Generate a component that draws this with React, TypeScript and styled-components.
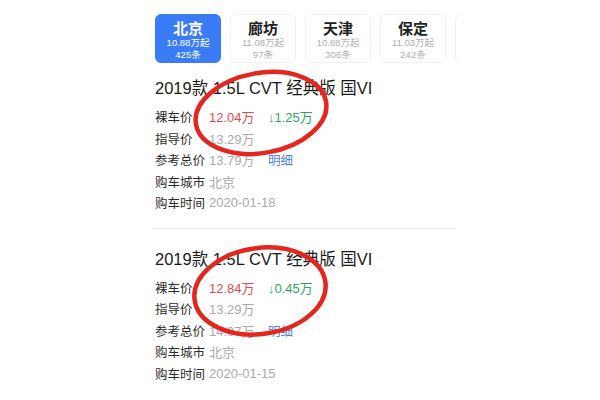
import React from "react";
import styled, { createGlobalStyle } from "styled-components";

const GlobalStyle = createGlobalStyle`
  html, body {
    margin: 0;
    padding: 0;
    background: #ffffff;
  }
  body {
    font-family: "Liberation Sans", "Noto Sans CJK SC", sans-serif;
  }
`;

const Page = styled.div`
  position: relative;
  width: 600px;
  height: 400px;
  overflow: hidden;
  display: flex;
  justify-content: center;
`;

const Phone = styled.div`
  width: 320px;
  flex: none;
  box-sizing: border-box;
  padding: 14px 0 0 15px;
  overflow: hidden;
`;

const TabRow = styled.div`
  display: flex;
  gap: 9px;
  overflow: hidden;
`;

const Tab = styled.div<{ $active?: boolean }>`
  flex: none;
  width: 66px;
  height: 49px;
  box-sizing: border-box;
  border-radius: 6px;
  padding-top: 4px;
  text-align: center;
  background: ${(p) => (p.$active ? "#3a7cf6" : "#ffffff")};
  border: 1px solid ${(p) => (p.$active ? "#3a7cf6" : "#f1f1f1")};
  color: ${(p) => (p.$active ? "#ffffff" : "#222222")};
`;

const TabCity = styled.div`
  font-family: "Noto Sans CJK SC", sans-serif;
  font-size: 15px;
  font-weight: 700;
  line-height: 18px;
`;

const TabSub = styled.div<{ $active?: boolean }>`
  font-size: 9.5px;
  line-height: 12px;
  white-space: nowrap;
  color: ${(p) => (p.$active ? "#ffffff" : "#b0b0b0")};
`;

const Card = styled.div`
  padding-top: 14px;
`;

const Title = styled.div`
  font-size: 16.5px;
  line-height: 22px;
  color: #1a1a1a;
  margin-bottom: 7px;
  white-space: nowrap;
`;

const Row = styled.div`
  display: flex;
  align-items: center;
  height: 21.5px;
`;

const Label = styled.div`
  width: 54px;
  flex: none;
  font-family: "Noto Sans CJK SC", sans-serif;
  font-size: 12.5px;
  color: #2b2b2b;
`;

const Value = styled.div<{ $tone?: "red" | "gray" }>`
  width: 59px;
  flex: none;
  font-size: 13px;
  white-space: nowrap;
  color: ${(p) => (p.$tone === "red" ? "#de4b50" : "#a9a9a9")};
`;

const Drop = styled.div`
  font-size: 13px;
  color: #2fa463;
  white-space: nowrap;
`;

const Link = styled.div`
  font-family: "Noto Sans CJK SC", sans-serif;
  font-size: 12.5px;
  color: #4f7fd8;
`;

const Divider = styled.div`
  height: 1px;
  background: #f0f0f0;
  margin: 14px 5px 5px -3px;
`;

const Marks = styled.svg`
  position: absolute;
  left: 0;
  top: 0;
  pointer-events: none;
`;

interface CityTab {
  city: string;
  price: string;
  count: string;
}

interface Purchase {
  bare: string;
  drop: string;
  guide: string;
  total: string;
  city: string;
  date: string;
}

const tabs: CityTab[] = [
  { city: "北京", price: "10.88万起", count: "425条" },
  { city: "廊坊", price: "11.08万起", count: "97条" },
  { city: "天津", price: "10.88万起", count: "306条" },
  { city: "保定", price: "11.03万起", count: "242条" },
];

const purchases: Purchase[] = [
  { bare: "12.04万", drop: "↓1.25万", guide: "13.29万", total: "13.79万", city: "北京", date: "2020-01-18" },
  { bare: "12.84万", drop: "↓0.45万", guide: "13.29万", total: "14.07万", city: "北京", date: "2020-01-15" },
];

const PurchaseCard = ({ item }: { item: Purchase }) => (
  <Card>
    <Title>2019款 1.5L CVT 经典版 国VI</Title>
    <Row>
      <Label>裸车价</Label>
      <Value $tone="red">{item.bare}</Value>
      <Drop>{item.drop}</Drop>
    </Row>
    <Row>
      <Label>指导价</Label>
      <Value>{item.guide}</Value>
    </Row>
    <Row>
      <Label>参考总价</Label>
      <Value>{item.total}</Value>
      <Link>明细</Link>
    </Row>
    <Row>
      <Label>购车城市</Label>
      <Value>{item.city}</Value>
    </Row>
    <Row>
      <Label>购车时间</Label>
      <Value>{item.date}</Value>
    </Row>
  </Card>
);

export default function App() {
  return (
    <>
      <GlobalStyle />
      <Page>
        <Phone>
          <TabRow>
            {tabs.map((t, i) => (
              <Tab key={t.city} $active={i === 0}>
                <TabCity>{t.city}</TabCity>
                <TabSub $active={i === 0}>{t.price}</TabSub>
                <TabSub $active={i === 0}>{t.count}</TabSub>
              </Tab>
            ))}
            {/* next tab, scrolled off the edge */}
            <Tab />
          </TabRow>
          <PurchaseCard item={purchases[0]} />
          <Divider />
          <PurchaseCard item={purchases[1]} />
        </Phone>
        <Marks width="600" height="400" viewBox="0 0 600 400">
          <g fill="none" stroke="#e3261e" strokeWidth="4.5" strokeLinecap="round">
            <ellipse cx="261" cy="113" rx="66" ry="40" transform="rotate(-10 261 113)" />
            <ellipse cx="260" cy="291" rx="66" ry="43" transform="rotate(-8 260 291)" />
          </g>
        </Marks>
      </Page>
    </>
  );
}
